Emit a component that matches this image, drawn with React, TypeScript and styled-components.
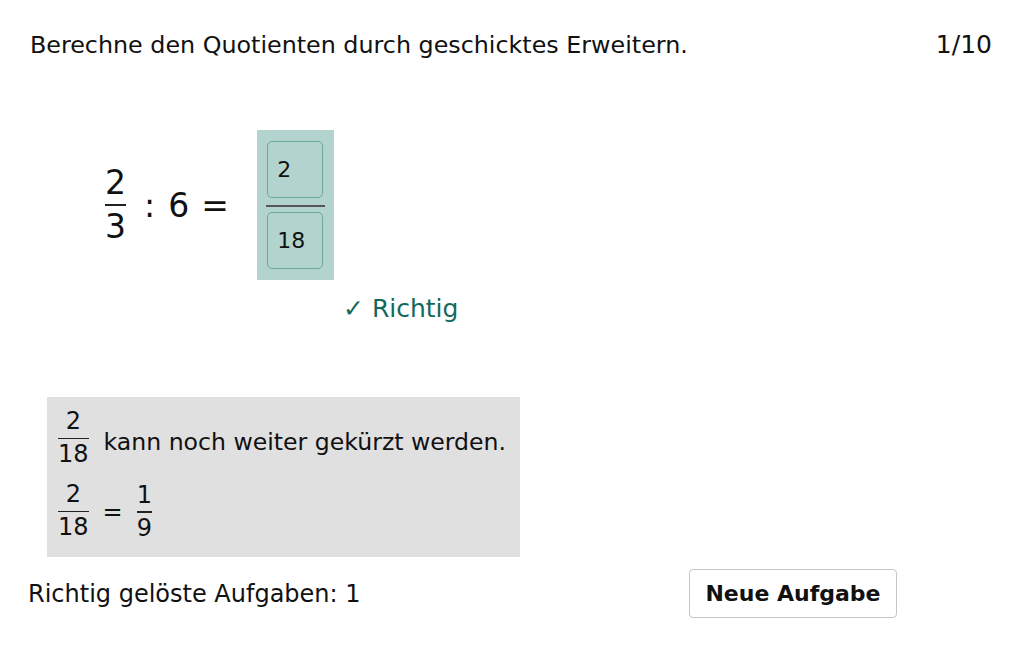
import styled, { createGlobalStyle } from "styled-components";

const GlobalStyle = createGlobalStyle`
  html, body {
    margin: 0;
    padding: 0;
    background: #ffffff;
  }
  body {
    font-family: "DejaVu Sans", "Liberation Sans", sans-serif;
    color: #111111;
  }
`;

const Page = styled.div`
  width: 1032px;
  height: 645px;
  box-sizing: border-box;
  padding: 30px 40px 0 28px;
`;

const Header = styled.header`
  display: flex;
  justify-content: space-between;
  align-items: baseline;
  font-size: 23.8px;
  line-height: 30px;
`;

const Title = styled.h1`
  margin: 0 0 0 2px;
  font-size: inherit;
  font-weight: 400;
`;

const Counter = styled.span`
  font-size: 25px;
`;

const EquationRow = styled.div`
  display: flex;
  align-items: center;
  margin-top: 70px;
  padding-left: 77px;
  font-size: 33px;
`;

const Frac = styled.span<{ size?: number }>`
  display: inline-flex;
  flex-direction: column;
  align-items: center;
  font-size: ${(p) => (p.size ? `${p.size}px` : "inherit")};
  line-height: 1.15;
`;

const Bar = styled.span<{ thick?: number }>`
  align-self: stretch;
  height: ${(p) => p.thick ?? 1.5}px;
  margin: 2px 0;
  background: #222222;
`;

const Op = styled.span<{ gap: number }>`
  margin-left: ${(p) => p.gap}px;
`;

const AnswerBox = styled.div`
  display: flex;
  flex-direction: column;
  align-items: center;
  margin-left: 28px;
  padding: 11px 10px;
  width: 77px;
  box-sizing: border-box;
  background: #b3d3ce;
`;

const AnswerInput = styled.input`
  width: 56px;
  height: 57px;
  box-sizing: border-box;
  padding: 0 0 0 9px;
  border: 1px solid #6ba99c;
  border-radius: 5px;
  background: transparent;
  font-family: "DejaVu Sans", "Liberation Sans", sans-serif;
  font-size: 22px;
  color: #111111;
  outline: none;
`;

const AnswerBar = styled.div`
  align-self: stretch;
  height: 2px;
  margin: 7px -1px 5px;
  background: #555555;
`;

const Feedback = styled.div`
  margin-top: 14px;
  padding-left: 315px;
  font-size: 25px;
  line-height: 30px;
  color: #13695a;
`;

const HintBox = styled.div`
  display: flex;
  flex-direction: column;
  gap: 12px;
  margin: 73px 0 0 19px;
  width: 473px;
  height: 160px;
  box-sizing: border-box;
  padding: 11px 11px;
  background: #e0e0e0;
  font-size: 24px;
`;

const HintRow = styled.div`
  display: flex;
  align-items: center;
  white-space: nowrap;
`;

const HintText = styled.span`
  margin-left: 15px;
  position: relative;
  top: 4px;
  font-size: 23.6px;
`;

const Footer = styled.div`
  display: flex;
  justify-content: space-between;
  align-items: center;
  margin-top: 12px;
  padding-right: 95px;
`;

const Score = styled.span`
  font-size: 24px;
  line-height: 30px;
`;

const Button = styled.button`
  width: 208px;
  height: 49px;
  border: 1px solid #c6c6c6;
  border-radius: 4px;
  background: #ffffff;
  font-family: "DejaVu Sans", "Liberation Sans", sans-serif;
  font-size: 22px;
  font-weight: 700;
  color: #111111;
  cursor: pointer;
`;

function Fraction({ num, den, size }: { num: string; den: string; size?: number }) {
  return (
    <Frac size={size}>
      <span>{num}</span>
      <Bar />
      <span>{den}</span>
    </Frac>
  );
}

export default function App() {
  return (
    <>
      <GlobalStyle />
      <Page>
        <Header>
          <Title>Berechne den Quotienten durch geschicktes Erweitern.</Title>
          <Counter>1/10</Counter>
        </Header>

        <EquationRow>
          <Fraction num="2" den="3" />
          <Op gap={18}>:</Op>
          <Op gap={13}>6</Op>
          <Op gap={12}>=</Op>
          <AnswerBox>
            <AnswerInput defaultValue="2" readOnly />
            <AnswerBar />
            <AnswerInput defaultValue="18" readOnly />
          </AnswerBox>
        </EquationRow>

        <Feedback>✓ Richtig</Feedback>

        <HintBox>
          <HintRow>
            <Fraction num="2" den="18" />
            <HintText>kann noch weiter gekürzt werden.</HintText>
          </HintRow>
          <HintRow>
            <Fraction num="2" den="18" />
            <Op gap={14}>=</Op>
            <Op gap={14}>
              <Fraction num="1" den="9" />
            </Op>
          </HintRow>
        </HintBox>

        <Footer>
          <Score>Richtig gelöste Aufgaben: 1</Score>
          <Button>Neue Aufgabe</Button>
        </Footer>
      </Page>
    </>
  );
}
